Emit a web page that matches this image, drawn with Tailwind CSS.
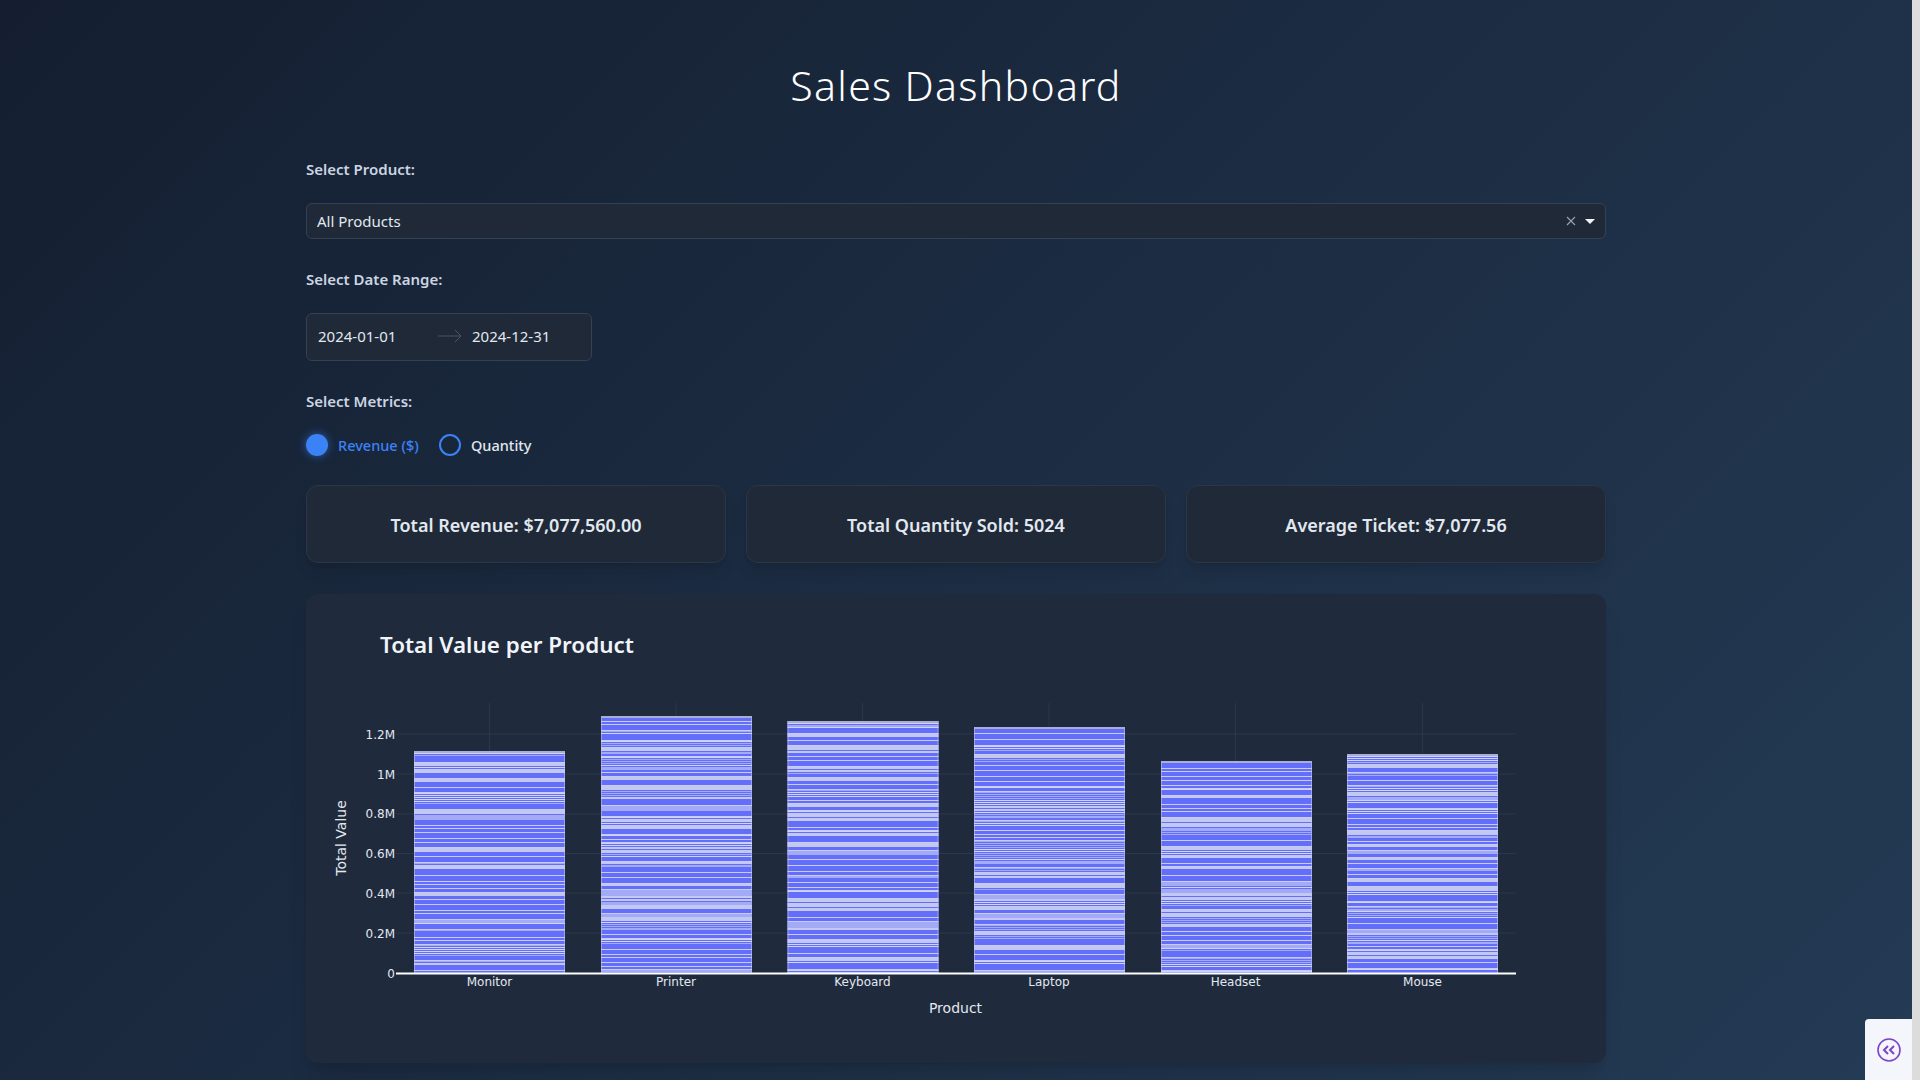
<!DOCTYPE html>
<html lang="en">
<head>
<meta charset="utf-8">
<title>Sales Dashboard</title>
<script src="https://cdn.jsdelivr.net/npm/@tailwindcss/browser@4"></script>
</head>
<body class="m-0">
<div class="flex h-screen w-full overflow-hidden font-['Noto_Sans','Open_Sans',sans-serif] bg-linear-[135deg] from-[#141e30] to-[#243b55]">
  <div class="relative flex-1 min-w-0">
    <main class="w-[1300px] ml-[306px]">
      <h1 class="mt-[61px] h-12 text-center text-[41px] leading-12 font-light tracking-[1.3px] text-white">Sales Dashboard</h1>

      <label class="block mt-[50px] h-5 text-[15px] leading-5 font-semibold text-[#cbd5e1]">Select Product:</label>
      <div class="mt-6 h-9 flex items-center pl-[10px] pr-[8px] bg-[#1f2937] border border-[#334155] rounded-md text-[15px] text-[#e2e8f0]">
        <span class="flex-1">All Products</span>
        <svg class="w-[10px] h-[10px] mr-[9px]" viewBox="0 0 10 10" fill="none" stroke="#9ca3af" stroke-width="1.1"><path d="M1 1l8 8M9 1l-8 8"/></svg>
        <span class="w-0 h-0 mr-[2px] border-x-[5px] border-x-transparent border-t-[5px] border-t-[#f1f5f9]"></span>
      </div>

      <label class="block mt-[30px] h-5 text-[15px] leading-5 font-semibold text-[#cbd5e1]">Select Date Range:</label>
      <div class="mt-6 w-[286px] h-12 pb-[2px] flex items-center pl-[11px] bg-[#1f2937] border border-[#334155] rounded-md text-[15px] text-[#e2e8f0]">
        <span class="w-[120px]">2024-01-01</span>
        <svg class="w-[24px] h-[14px] mr-[10px]" viewBox="0 0 24 14" fill="none" stroke="#4b5563" stroke-width="1"><path d="M0 7h23M17 1l6 6-6 6"/></svg>
        <span>2024-12-31</span>
      </div>

      <label class="block mt-[30px] h-5 text-[15px] leading-5 font-semibold text-[#cbd5e1]">Select Metrics:</label>
      <div class="mt-[23px] h-[22px] flex items-center text-[14.5px] font-medium">
        <span class="w-[22px] h-[22px] rounded-full bg-[#3b82f6] shadow-[0_0_8px_rgba(59,130,246,0.6)]"></span>
        <span class="ml-[10px] pt-[2px] text-[#3b82f6] w-[101px]">Revenue ($)</span>
        <span class="w-[22px] h-[22px] rounded-full border-2 border-[#3b82f6]"></span>
        <span class="ml-[10px] pt-[2px] text-[#e2e8f0]">Quantity</span>
      </div>

      <div class="mt-[29px] grid grid-cols-3 gap-5">
        <div class="h-[78px] pt-[2px] flex items-center justify-center bg-[#1f2937] border border-[#2b3646] rounded-xl shadow-lg text-lg font-semibold text-[#e2e8f0]">Total Revenue: $7,077,560.00</div>
        <div class="h-[78px] pt-[2px] flex items-center justify-center bg-[#1f2937] border border-[#2b3646] rounded-xl shadow-lg text-lg font-semibold text-[#e2e8f0]">Total Quantity Sold: 5024</div>
        <div class="h-[78px] pt-[2px] flex items-center justify-center bg-[#1f2937] border border-[#2b3646] rounded-xl shadow-lg text-lg font-semibold text-[#e2e8f0]">Average Ticket: $7,077.56</div>
      </div>

      <section class="mt-[31px] h-[469px] bg-[#1f2a3c] rounded-xl shadow-xl">
        <svg id="chart" class="block" width="1300" height="469" viewBox="306 594 1300 469">
          <g stroke="#2c3749" stroke-width="1">
            <path d="M396 734H1516M396 774H1516M396 814H1516M396 853.5H1516M396 893H1516M396 933H1516"/>
            <path d="M489.500 703V973M676 703V973M862.500 703V973M1049 703V973M1235.500 703V973M1422.500 703V973"/>
          </g>
          <g id="bars"></g>
          <path d="M396 973.500H1516" stroke="#ffffff" stroke-width="2"/>
          <text x="380" y="653" fill="#f1f5f9" font-size="22.400" font-weight="600">Total Value per Product</text>
          <g fill="#e2e8f0" font-size="12" text-anchor="end" font-family="'DejaVu Sans',sans-serif">
            <text x="395" y="738.500">1.2M</text>
            <text x="395" y="778.500">1M</text>
            <text x="395" y="818">0.8M</text>
            <text x="395" y="858">0.6M</text>
            <text x="395" y="897.500">0.4M</text>
            <text x="395" y="937.500">0.2M</text>
            <text x="395" y="977.500">0</text>
          </g>
          <g fill="#e2e8f0" font-size="12" text-anchor="middle" font-family="'DejaVu Sans',sans-serif">
            <text x="489.500" y="985.500">Monitor</text>
            <text x="676" y="985.500">Printer</text>
            <text x="862.500" y="985.500">Keyboard</text>
            <text x="1049" y="985.500">Laptop</text>
            <text x="1235.500" y="985.500">Headset</text>
            <text x="1422.500" y="985.500">Mouse</text>
            <text x="955.500" y="1013" font-size="14">Product</text>
            <text transform="translate(346 838) rotate(-90)" font-size="14">Total Value</text>
          </g>
        </svg>
      </section>
    </main>

    <div class="absolute right-0 bottom-0 w-[47px] h-[61px] flex items-center justify-center bg-[#f5f6fc] rounded-tl-[4px]">
      <svg class="w-6 h-6" viewBox="0 0 24 24" fill="none" stroke="#7a45c8" stroke-width="1.600">
        <circle cx="12" cy="12" r="11"/>
        <path d="M11 8l-4 4 4 4M17 8l-4 4 4 4" stroke-width="2"/>
      </svg>
    </div>
  </div>
  <div class="w-2 shrink-0 bg-[#dcdcdc]"></div>
</div>
<script>
  var seed = 20240101;
  function rnd() {
    seed = (seed + 0x6D2B79F5) | 0;
    var t = Math.imul(seed ^ (seed >>> 15), 1 | seed);
    t = (t + Math.imul(t ^ (t >>> 7), 61 | t)) ^ t;
    return ((t ^ (t >>> 14)) >>> 0) / 4294967296;
  }
  var data = [[414,751,0.08],[601,716,0.1],[787.5,721,0.08],[974,727,0.06],[1161,761,0.08],[1347,754,0.16]];
  var NS = 'http://www.w3.org/2000/svg', host = document.getElementById('bars');
  function rect(x, y, w, h, fill, bottom) {
    if (y >= bottom) return;
    var r = document.createElementNS(NS, 'rect');
    r.setAttribute('x', x); r.setAttribute('y', y); r.setAttribute('width', w);
    r.setAttribute('height', Math.min(h, bottom - y));
    r.setAttribute('fill', fill);
    host.appendChild(r);
  }
  data.forEach(function (d) {
    var x = d[0], top = d[1], w = 151, bottom = 973;
    rect(x, top, w, bottom - top, '#636efa', bottom);
    rect(x, top, 1, bottom - top, '#9aa1e6', bottom);
    rect(x + w - 1, top, 1, bottom - top, '#9aa1e6', bottom);
    rect(x, top, w, 2, '#a9aed8', bottom);
    var y = top + 2;
    while (y < bottom) {
      var r = rnd(), n, i;
      if (r < 0.42) {
        y += 2 + Math.floor(rnd() * 4);
        rect(x, y, w, 1, '#c8ccf5', bottom);
        y += 1;
      } else if (r < 0.8 - d[2]) {
        n = 1 + Math.floor(rnd() * 3);
        for (i = 0; i < n; i++) {
          rect(x, y, w, 1, rnd() < 0.5 ? '#d0d4f6' : '#a4abf6', bottom);
          y += 2;
        }
      } else if (r < 0.8) {
        n = 2 + Math.floor(rnd() * 3);
        rect(x, y, w, n, '#a4abf6', bottom);
        y += n;
      } else {
        n = 2 + Math.floor(rnd() * 3);
        rect(x, y, w, n, '#c3c8f1', bottom);
        y += n + 1;
      }
    }
  });
</script>
</body>
</html>
